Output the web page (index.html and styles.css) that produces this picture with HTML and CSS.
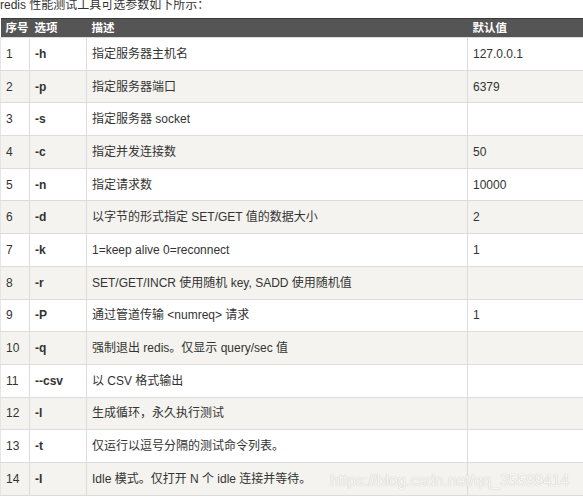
FILE: index.html
```html
<!DOCTYPE html>
<html lang="zh-CN">
<head>
<meta charset="utf-8">
<title>redis 性能测试工具参数</title>
<link rel="stylesheet" href="styles.css">
</head>
<body>
<div class="page">
  <p class="intro">redis 性能测试工具可选参数如下所示：</p>
  <table class="params">
    <colgroup>
      <col class="c-no"><col class="c-opt"><col class="c-desc"><col class="c-def">
    </colgroup>
    <thead>
      <tr><th>序号</th><th>选项</th><th>描述</th><th>默认值</th></tr>
    </thead>
    <tbody>
      <tr><td>1</td><td class="opt">-h</td><td>指定服务器主机名</td><td>127.0.0.1</td></tr>
      <tr><td>2</td><td class="opt">-p</td><td>指定服务器端口</td><td>6379</td></tr>
      <tr><td>3</td><td class="opt">-s</td><td>指定服务器 socket</td><td></td></tr>
      <tr><td>4</td><td class="opt">-c</td><td>指定并发连接数</td><td>50</td></tr>
      <tr><td>5</td><td class="opt">-n</td><td>指定请求数</td><td>10000</td></tr>
      <tr><td>6</td><td class="opt">-d</td><td>以字节的形式指定 SET/GET 值的数据大小</td><td>2</td></tr>
      <tr><td>7</td><td class="opt">-k</td><td>1=keep alive 0=reconnect</td><td>1</td></tr>
      <tr><td>8</td><td class="opt">-r</td><td>SET/GET/INCR 使用随机 key, SADD 使用随机值</td><td></td></tr>
      <tr><td>9</td><td class="opt">-P</td><td>通过管道传输 &lt;numreq&gt; 请求</td><td>1</td></tr>
      <tr><td>10</td><td class="opt">-q</td><td>强制退出 redis。仅显示 query/sec 值</td><td></td></tr>
      <tr><td>11</td><td class="opt">--csv</td><td>以 CSV 格式输出</td><td></td></tr>
      <tr><td>12</td><td class="opt">-l</td><td>生成循环，永久执行测试</td><td></td></tr>
      <tr><td>13</td><td class="opt">-t</td><td>仅运行以逗号分隔的测试命令列表。</td><td></td></tr>
      <tr><td>14</td><td class="opt">-I</td><td>Idle 模式。仅打开 N 个 idle 连接并等待。</td><td></td></tr>
    </tbody>
  </table>
  <div class="watermark">https://blog.csdn.net/qq_35599414</div>
</div>
</body>
</html>
```
FILE: styles.css
```css
html, body {
  margin: 0;
  padding: 0;
  background: #fff;
}
.page {
  position: relative;
  width: 583px;
  height: 498px;
  overflow: hidden;
  font-family: "Liberation Sans", Arial, "Noto Sans CJK SC", sans-serif;
  font-size: 12px;
  color: #333;
}
.intro {
  margin: -3px 0 5px;
  line-height: 16px;
  color: #333;
}
.params {
  width: 583px;
  border-collapse: collapse;
  table-layout: fixed;
}
.c-no { width: 29px; }
.c-opt { width: 57px; }
.c-desc { width: 381px; }
.c-def { width: 116px; }
.params th {
  background: #555;
  color: #fff;
  font-weight: bold;
  font-size: 11.5px;
  text-align: left;
  height: 18px;
  padding: 0 0 0 5px;
  border-top: 1px solid #3a3a3a;
  line-height: 18px;
}
.params td {
  height: 31.7px;
  padding: 0 0 0 5px;
  border: 1px solid #dcdcdc;
  vertical-align: middle;
  line-height: 16px;
}
.params tbody tr:nth-child(even) td {
  background: #f4f3ef;
}
.params td:first-child { border-left-color: #e6e6e6; }
.params td.opt {
  font-weight: bold;
  color: #333;
}
.watermark {
  position: absolute;
  left: 330px;
  top: 472px;
  font-family: "Liberation Sans", Arial, sans-serif;
  font-size: 15.6px;
  color: rgba(255, 255, 255, 0.9);
  text-shadow: 0 0 1px rgba(0, 0, 0, 0.28);
  white-space: nowrap;
}
```
